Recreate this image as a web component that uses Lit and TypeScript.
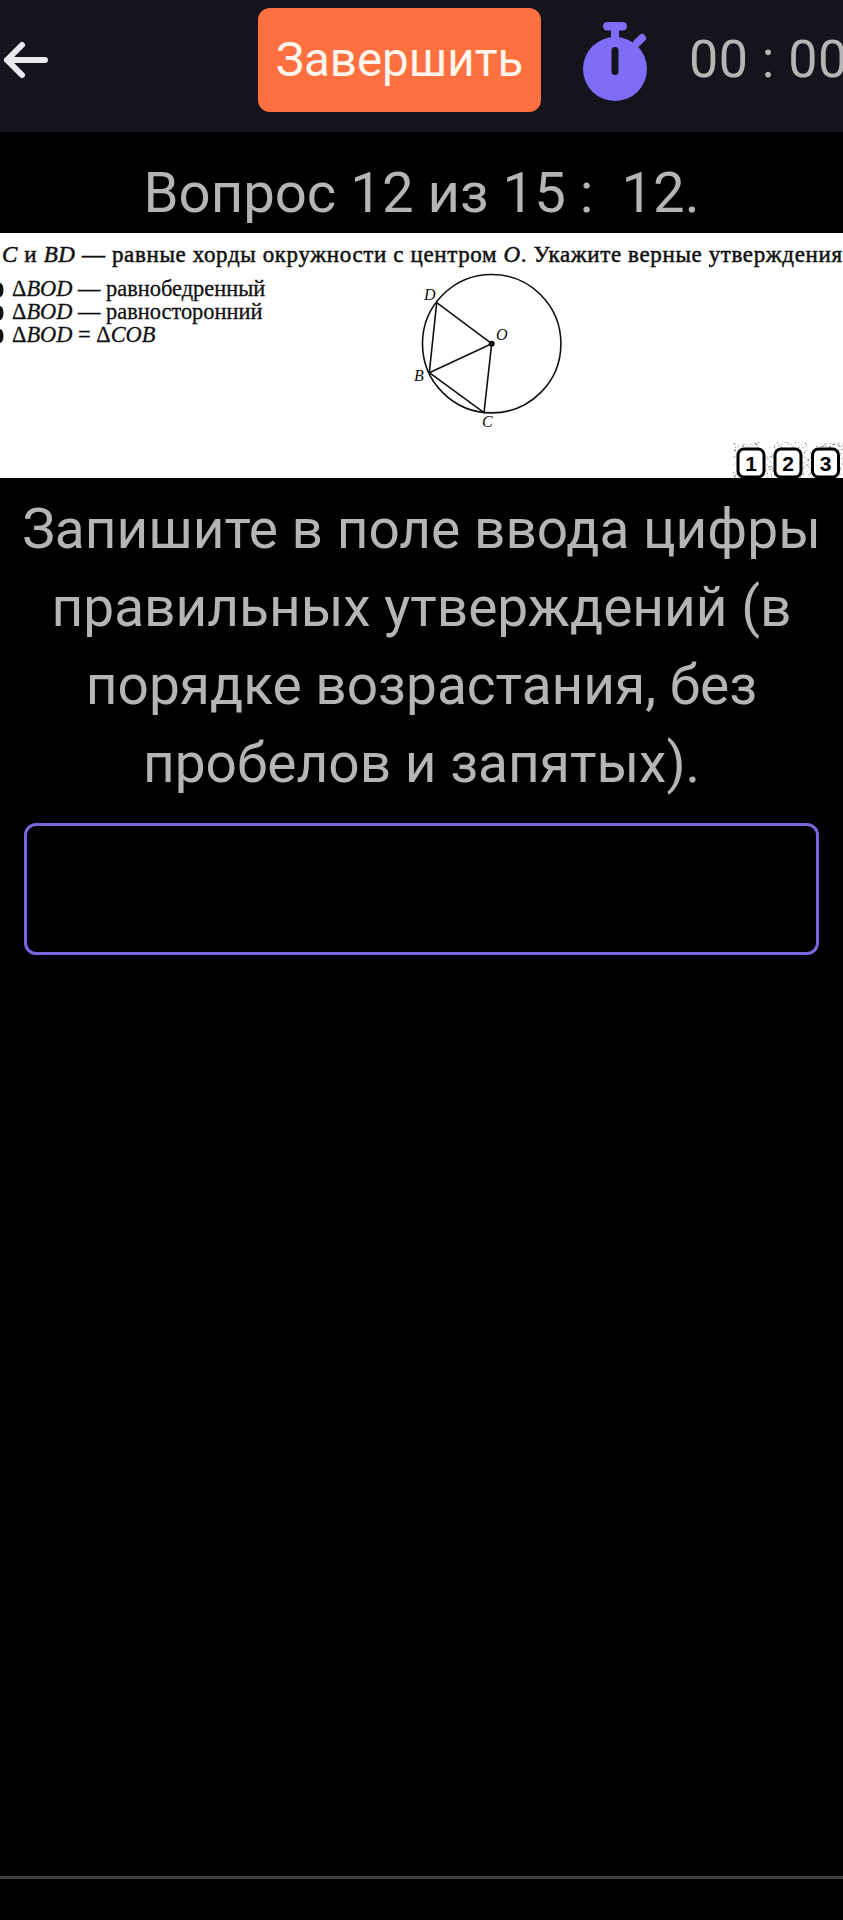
import { LitElement, html, css, svg } from "lit";
import { customElement } from "lit/decorators.js";

// speckle from the scanned image, fixed seed so the picture stays the same
function speckle() {
  const dots = [];
  let s = 7;
  const next = () => (s = (s * 16807) % 2147483647) / 2147483647;
  for (let i = 0; i < 460; i++) {
    const x = 733 + next() * 110;
    const y = 209 + next() * 36;
    dots.push(svg`<rect x=${x} y=${y} width="1" height="1" fill="#333" opacity=${0.25 + next() * 0.6}></rect>`);
  }
  return dots;
}

@customElement("app-root")
export class AppRoot extends LitElement {
  static styles = css`
    :host {
      display: flex;
      flex-direction: column;
      width: 843px;
      height: 1920px;
      overflow: hidden;
      background: #000;
      font-family: Roboto, sans-serif;
      color: #b5b5b5;
    }
    .header {
      display: flex;
      align-items: center;
      height: 132px;
      flex: none;
      background: #15131b;
      white-space: nowrap;
    }
    .back {
      width: 50px;
      height: 40px;
      flex: none;
      margin-top: -12px;
    }
    .finish {
      display: flex;
      align-items: center;
      justify-content: center;
      width: 283px;
      height: 104px;
      margin-left: 208px;
      border-radius: 12px;
      background: #ff7040;
      color: #fff6ee;
      font-size: 47.5px;
      flex: none;
      margin-top: -12px;
    }
    .watch {
      width: 64px;
      height: 80px;
      margin-left: 42px;
      flex: none;
      margin-top: -9px;
    }
    .time {
      margin-left: 42px;
      font-size: 52px;
      margin-top: -14px;
      letter-spacing: 0.5px;
    }
    .title {
      height: 81px;
      padding-top: 20px;
      flex: none;
      display: flex;
      align-items: center;
      justify-content: center;
      font-size: 56.3px;
      white-space: pre;
    }
    .picture {
      display: block;
      width: 843px;
      height: 245px;
      flex: none;
      background: #fff;
    }
    .prompt {
      margin: 12px 0 0;
      font-size: 55px;
      line-height: 78px;
      text-align: center;
      flex: none;
    }
    .answer {
      height: 132px;
      margin: 21px 24px 0;
      box-sizing: border-box;
      border: 3px solid #7766dd;
      border-radius: 12px;
      flex: none;
    }
    .rule {
      margin-top: auto;
      margin-bottom: 41px;
      height: 3px;
      background: #3f3f3f;
      flex: none;
    }
    .serif {
      font-family: "Liberation Serif", serif;
      fill: #111;
    }
    .q {
      font-size: 23px;
      stroke: #111;
      stroke-width: 0.5px;
    }
    .it {
      font-style: italic;
    }
    .opt {
      font-size: 22.4px;
      stroke: #111;
      stroke-width: 0.3px;
    }
    .lbl {
      font-size: 16px;
      font-style: italic;
    }
    .num {
      font-family: "Liberation Sans", sans-serif;
      font-size: 21px;
      font-weight: 700;
      fill: #000;
      text-anchor: middle;
    }
  `;

  picture() {
    const opts = [
      { y: 63, tail: " — равнобедренный", extra: "" },
      { y: 86, tail: " — равносторонний", extra: "" },
      { y: 109, tail: "", extra: "COB" },
    ];
    return html`
      <svg class="picture" viewBox="0 0 843 245">
        <text class="serif q" x="2" y="29" textLength="840"><tspan class="it">C</tspan> и <tspan class="it">BD</tspan> — равные хорды окружности с центром <tspan class="it">O</tspan>. Укажите верные утверждения</text>
        ${opts.map(
          (o) => svg`
            <ellipse cx="0" cy=${o.y - 6} rx="3.5" ry="7" fill="#111"></ellipse>
            <text class="serif opt" x="12" y=${o.y}>Δ<tspan class="it">BOD</tspan>${o.tail}${o.extra
              ? svg` = Δ<tspan class="it">${o.extra}</tspan>`
              : ""}</text>`
        )}
        <g fill="none" stroke="#111" stroke-width="1.6">
          <circle cx="491.7" cy="110.7" r="69.2"></circle>
          <path d="M436.7 69.7L491.7 110.7L429.3 139.7ZM429.3 139.7L484 179.7L491.7 110.7" stroke-linejoin="round"></path>
        </g>
        <circle cx="491.7" cy="110.7" r="3" fill="#111"></circle>
        <text class="serif lbl" x="424" y="67">D</text>
        <text class="serif lbl" x="496" y="107">O</text>
        <text class="serif lbl" x="414" y="148">B</text>
        <text class="serif lbl" x="482" y="194">C</text>
        ${speckle()}
        ${[751, 788, 825.5].map(
          (x, i) => svg`
            <rect x=${x - 13} y="216" width="26" height="28" rx="6" fill="#fff" stroke="#000" stroke-width="3"></rect>
            <text class="num" x=${x} y="238">${i + 1}</text>`
        )}
      </svg>
    `;
  }

  render() {
    return html`
      <div class="header">
        <svg class="back" viewBox="0 0 50 40">
          <path d="M22 5L7 20L22 35M7 20H45" fill="none" stroke="#ebe8f0" stroke-width="6" stroke-linecap="round" stroke-linejoin="round"></path>
        </svg>
        <div class="finish">Завершить</div>
        <svg class="watch" viewBox="0 0 64 80">
          <rect x="20" y="0" width="24" height="8.5" rx="4.2" fill="#7f6cf7"></rect>
          <rect x="28" y="6" width="8" height="12" fill="#7f6cf7"></rect>
          <path d="M54 21L59 16" stroke="#7f6cf7" stroke-width="8" stroke-linecap="round"></path>
          <circle cx="32" cy="47" r="32" fill="#7f6cf7"></circle>
          <rect x="28.5" y="25" width="7" height="28" rx="3.5" fill="#15131b"></rect>
        </svg>
        <div class="time">00 : 00</div>
      </div>
      <div class="title">Вопрос 12 из 15 :  12.</div>
      ${this.picture()}
      <div class="prompt">Запишите в поле ввода цифры правильных утверждений (в порядке возрастания, без пробелов и запятых).</div>
      <div class="answer"></div>
      <div class="rule"></div>
    `;
  }
}
